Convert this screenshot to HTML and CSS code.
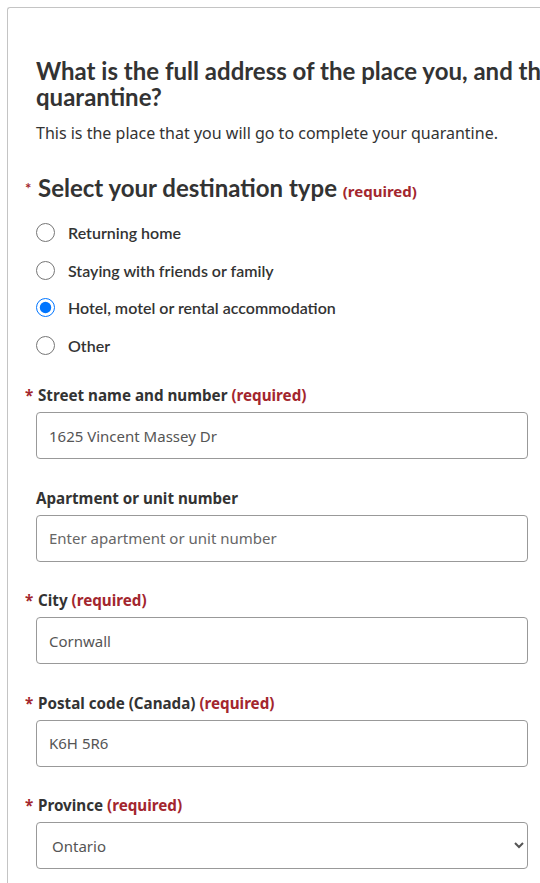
FILE: index.html
```html
<!DOCTYPE html>
<html lang="en">
<head>
  <meta charset="UTF-8">
  <meta name="viewport" content="width=device-width, initial-scale=1.0">
  <title>Quarantine address</title>
  <link rel="stylesheet" href="styles.css">
</head>
<body>
  <div class="card">
    <!-- Question -->
    <h2 class="question">What is the full address of the place you, and those travelling with you, will use to<br>quarantine?</h2>
    <p class="intro">This is the place that you will go to complete your quarantine.</p>

    <!-- Destination type -->
    <fieldset class="choices">
      <legend class="choices-title">
        <span class="mark mark-small">*</span>Select your destination type <strong class="required">(required)</strong>
      </legend>
      <label class="choice"><input type="radio" name="destination" value="home"> Returning home</label>
      <label class="choice"><input type="radio" name="destination" value="friends"> Staying with friends or family</label>
      <label class="choice"><input type="radio" name="destination" value="hotel" checked> Hotel, motel or rental accommodation</label>
      <label class="choice"><input type="radio" name="destination" value="other"> Other</label>
    </fieldset>

    <!-- Address fields -->
    <div class="field">
      <label for="street"><span class="mark">*</span>Street name and number <strong class="required">(required)</strong></label>
      <input type="text" id="street" value="1625 Vincent Massey Dr">
    </div>

    <div class="field">
      <label for="unit">Apartment or unit number</label>
      <input type="text" id="unit" placeholder="Enter apartment or unit number">
    </div>

    <div class="field">
      <label for="city"><span class="mark">*</span>City <strong class="required">(required)</strong></label>
      <input type="text" id="city" value="Cornwall">
    </div>

    <div class="field">
      <label for="postal"><span class="mark">*</span>Postal code (Canada) <strong class="required">(required)</strong></label>
      <input type="text" id="postal" value="K6H 5R6">
    </div>

    <div class="field">
      <label for="province"><span class="mark">*</span>Province <strong class="required">(required)</strong></label>
      <select id="province">
        <option>Ontario</option>
        <option>Quebec</option>
        <option>Manitoba</option>
      </select>
    </div>
  </div>
</body>
</html>
```

FILE: styles.css
```css
/* Base */
* {
  box-sizing: border-box;
}

html, body {
  overflow: hidden;
}

body {
  margin: 0;
  padding: 7px 0 0 7px;
  font-family: "Noto Sans", sans-serif;
  font-size: 15px;
  color: #333;
  background: #fff;
}

/* Card */
.card {
  width: 900px;
  border: 1px solid #c4c4c4;
  border-right: none;
  border-radius: 3px 0 0 0;
  padding: 50px 0 40px 28px;
}

.question {
  margin: 0;
  font-family: Lato, sans-serif;
  font-size: 24px;
  font-weight: 700;
  line-height: 26px;
  white-space: nowrap;
  color: #333;
}

.intro {
  margin: 11px 0 0;
  font-size: 16px;
  line-height: 24px;
}

/* Radio group */
.choices {
  border: 0;
  margin: 29px 0 0;
  padding: 0;
}

.choices-title {
  padding: 0;
  margin-bottom: 9px;
  font-family: Lato, sans-serif;
  font-size: 24px;
  font-weight: 700;
  line-height: 28px;
}

.choices-title .required {
  font-family: "Noto Sans", sans-serif;
  font-size: 15px;
}

.choice {
  display: flex;
  align-items: center;
  gap: 13px;
  height: 37.5px;
  font-family: Lato, sans-serif;
  font-size: 16px;
  font-weight: 600;
}

.choice input {
  width: 19px;
  height: 19px;
  margin: 0;
}

/* Fields */
.mark {
  display: inline-block;
  width: 13px;
  margin-left: -11px;
  color: #a3262e;
  font-weight: 700;
}

.mark-small {
  font-size: 15px;
  vertical-align: 3px;
}

.required {
  color: #a3262e;
  font-weight: 700;
}

.field {
  max-width: 492px;
  margin-top: 27.5px;
}

.choices + .field {
  margin-top: 20px;
}

.field label {
  display: block;
  margin-bottom: 6px;
  font-size: 15.2px;
  font-weight: 700;
  line-height: 22px;
}

.field input,
.field select {
  display: block;
  width: 100%;
  height: 47px;
  padding: 0 12px;
  border: 1px solid #999;
  border-radius: 4px;
  font-family: "Noto Sans", sans-serif;
  font-size: 15px;
  color: #555;
  background: #fff;
}

.field input::placeholder {
  color: #666;
}

.field select {
  padding-left: 11px;
}
```
